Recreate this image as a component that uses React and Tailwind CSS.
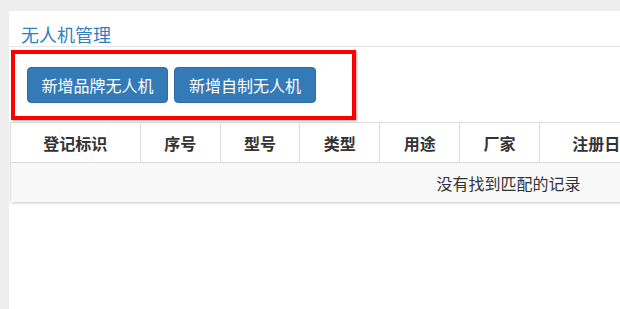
import React from "react";

const cols = [
  { t: "登记标识", w: 129 },
  { t: "序号", w: 80 },
  { t: "型号", w: 80 },
  { t: "类型", w: 80 },
  { t: "用途", w: 80 },
  { t: "厂家", w: 80 },
  { t: "注册日期", w: 130 },
  { t: "状态", w: 130 },
  { t: "操作", w: 208 },
];

export default function App() {
  return (
    <div
      className="relative w-[620px] h-[309px] overflow-hidden bg-[#eeeeee] pl-[9px] pt-[11px]"
      style={{ fontFamily: '"Noto Sans CJK SC", "Noto Sans", sans-serif' }}
    >
      <div className="w-[1100px] h-full bg-white">
        <div className="h-[36px] border-b border-[#e5e5e5] pl-[12px] pt-[11px] text-[18px] leading-[24px] text-[#2f7fc4]">
          无人机管理
        </div>
        <div className="flex gap-[6px] pl-[18px] pt-[20px] pb-[19px]">
          <button className="h-[36px] w-[141px] rounded-[4px] border border-[#2e6da4] bg-[#337ab7] text-[16px] text-white">
            新增品牌无人机
          </button>
          <button className="h-[36px] w-[142px] rounded-[4px] border border-[#2e6da4] bg-[#337ab7] text-[16px] text-white">
            新增自制无人机
          </button>
        </div>
        <div className="ml-[1px] w-[997px] rounded-b-[4px] border border-[#dddddd] shadow-[0_1px_2px_rgba(0,0,0,0.12)]">
          <div className="flex h-[40px] border-b border-[#dddddd]">
            {cols.map((c, i) => (
              <div
                key={c.t}
                className={`flex items-center justify-center text-[16px] font-bold text-[#333333] ${i > 0 ? "border-l border-[#dddddd]" : ""}`}
                style={{ width: c.w }}
              >
                {c.t}
              </div>
            ))}
          </div>
          <div className="flex h-[39px] items-center justify-center bg-[#f8f8f8] text-[16px] text-[#333333]">
            没有找到匹配的记录
          </div>
        </div>
      </div>
      <div className="absolute left-[11px] top-[50px] h-[70px] w-[345px] border-[4px] border-[#ff0000] shadow-[1px_1px_2px_rgba(0,0,0,0.35)]" />
    </div>
  );
}
